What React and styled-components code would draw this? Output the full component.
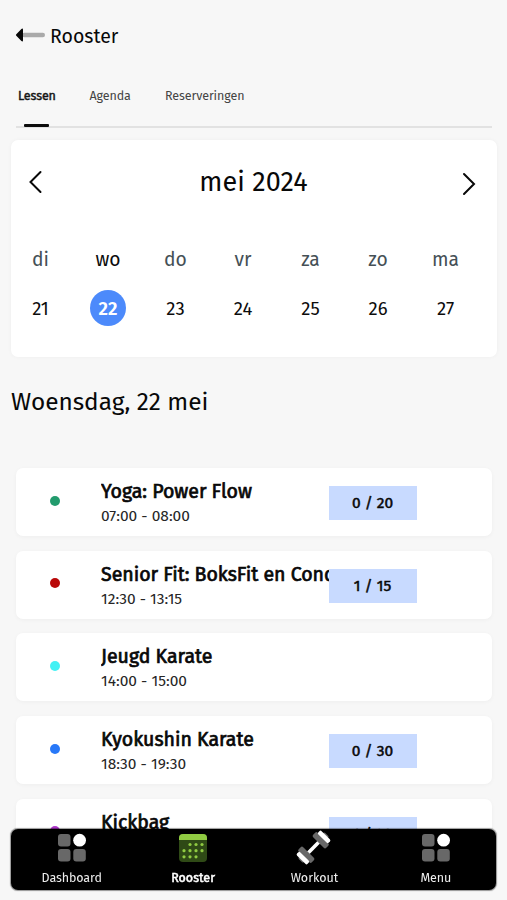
import React, { useState } from 'react'
import styled, { createGlobalStyle } from 'styled-components'

const GlobalStyle = createGlobalStyle`
  * {
    box-sizing: border-box;
  }

  body {
    margin: 0;
    background: #f7f7f7;
    color: #080808;
    font-family: 'Fira Sans', 'Noto Sans', sans-serif;
    overflow: hidden;
  }

  button {
    font: inherit;
    color: inherit;
    padding: 0;
    border: none;
    background: none;
  }
`

const Screen = styled.div`
  height: 900px;
  display: flex;
  flex-direction: column;
  overflow: hidden;
  background: #f7f7f7;
`

const Label = styled.span`
  letter-spacing: ${props => props.$spacing || 0}px;
  white-space: nowrap;
`

const Header = styled.header`
  display: flex;
  align-items: center;
  flex: none;
  height: 70px;
  padding-left: 15px;
  gap: 4px;
`

const Title = styled.h1`
  margin: 0;
  padding-top: 3px;
  font-size: 19.5px;
  line-height: 30px;
  font-weight: 400;
`

const Tabs = styled.nav`
  display: flex;
  flex: none;
  height: 58px;
  margin: 0 15px 0 16px;
  border-bottom: 2px solid #e2e2e2;
`

const Tab = styled.button`
  display: flex;
  flex-direction: column;
  justify-content: space-between;
  align-items: flex-start;
  width: ${props => props.$width}px;
  height: 57px;
  padding: 17px 0 0 2px;
  font-size: 12.5px;
  line-height: 18px;
  color: ${props => (props.$active ? '#151515' : '#444')};
  -webkit-text-stroke: ${props => (props.$active ? '0.45px #151515' : '0')};

  &::after {
    content: '';
    width: 25px;
    height: 3px;
    margin-left: 6px;
    border-radius: 1px;
    background: ${props => (props.$active ? '#0c0c0c' : 'transparent')};
  }
`

const Calendar = styled.section`
  flex: none;
  height: 217px;
  margin: 12px 10px 0 11px;
  border-radius: 7px;
  background: #fff;
  box-shadow: 0 0 4px rgba(0, 0, 0, 0.04);
`

const MonthBar = styled.div`
  display: flex;
  align-items: center;
  justify-content: space-between;
  height: 84px;
  padding: 0 21px 0 18px;
`

const Month = styled.h2`
  margin: 0;
  padding: 0 0 1px 2px;
  font-size: 27px;
  line-height: 36px;
  font-weight: 400;
`

const Arrow = styled.button`
  display: flex;
  padding-top: ${props => props.$drop || 0}px;
`

const Week = styled.div`
  display: flex;
  justify-content: space-between;
  padding: 21px 31px 0 9px;
`

const Day = styled.div`
  display: flex;
  flex-direction: column;
  align-items: center;
  width: 41px;
  font-size: 19.3px;
  line-height: 30px;
  color: ${props => (props.$active ? '#0c0c0c' : '#455056')};
`

const DayNumber = styled.div`
  width: 36px;
  height: 36px;
  margin-top: 15px;
  border-radius: 50%;
  text-align: center;
  font-size: 18.5px;
  line-height: 38px;
  font-weight: ${props => (props.$active ? 600 : 400)};
  color: ${props => (props.$active ? '#fff' : '#0c0c0c')};
  background: ${props => (props.$active ? '#4c8afb' : 'transparent')};
`

const DateHeading = styled.h2`
  flex: none;
  height: 111px;
  margin: 0 0 0 11px;
  padding-top: 28px;
  font-size: 24.4px;
  line-height: 34px;
  font-weight: 400;
`

const Lessons = styled.main`
  display: flex;
  flex: none;
  flex-direction: column;
  gap: 14.7px;
  height: 361px;
  padding: 0 15px 0 16px;
`

const Card = styled.article`
  display: grid;
  grid-template-columns: 85px 227.5px 88px;
  align-items: center;
  flex: none;
  height: 68px;
  border-radius: 7px;
  background: #fff;
  box-shadow: 0 1px 4px rgba(0, 0, 0, 0.04);
`

const Dot = styled.span`
  width: 10px;
  height: 10px;
  margin: 0 0 3px 34px;
  border-radius: 50%;
  background: ${props => props.$color};
`

const Info = styled.div`
  min-width: 0;
  padding-top: 2px;
  overflow: hidden;
`

const Name = styled.h3`
  margin: 0;
  font-size: 19.5px;
  line-height: 26px;
  font-weight: 400;
  -webkit-text-stroke: 0.7px #080808;
`

const Time = styled.div`
  font-size: 15.5px;
  line-height: 22px;
  color: #262626;
`

const Badge = styled.div`
  height: 34px;
  margin-top: 2px;
  background: #c8daff;
  text-align: center;
  font-size: 15.5px;
  line-height: 35px;
  -webkit-text-stroke: 0.5px #080808;
`

const BottomNav = styled.nav`
  position: fixed;
  left: 11px;
  top: 829px;
  width: 485px;
  height: 61px;
  display: grid;
  grid-template-columns: repeat(4, 121.4px);
  border-radius: 7px;
  background: #000;
  box-shadow: 0 0 1px 0.5px rgba(0, 0, 0, 0.4);
`

const NavItem = styled.button`
  display: flex;
  flex-direction: column;
  align-items: center;
  font-size: 12.5px;
  line-height: 18px;
  gap: 4px;
  color: ${props => (props.$active ? '#fff' : '#eee')};
  -webkit-text-stroke: ${props => (props.$active ? '0.5px #fff' : '0')};
`

const BackIcon = () => (
  <svg width="31" height="14" viewBox="0 0 31 14">
    <rect x="7" y="4.7" width="23" height="4.6" rx="2.2" fill="#aaa" />
    <path d="M1.3 6.2 6.4.9Q8 0 8 1.8v10.4q0 1.8-1.6.9L1.3 7.8Q.5 7 1.3 6.2Z" fill="#080808" />
  </svg>
)

const Chevron = ({ right }) => (
  <svg width="14" height="24" viewBox="0 0 14 24" fill="none" stroke="#080808" strokeWidth="2" strokeLinecap="round">
    <path d={right ? 'M2 2 12 12 2 22' : 'M11.5 2 1.5 12l10 10'} />
  </svg>
)

const TilesIcon = () => (
  <svg width="36" height="36" viewBox="0 0 36 36" fill="#686868">
    <rect x="4" y="5" width="12.5" height="12.5" rx="3" />
    <rect x="4" y="20" width="12.5" height="12.5" rx="3" />
    <rect x="19.3" y="20" width="12.5" height="12.5" rx="3" />
    <circle cx="25.6" cy="11.2" r="6.4" fill="#fff" />
  </svg>
)

const CalendarIcon = () => (
  <svg width="36" height="36" viewBox="0 0 36 36">
    <rect x="4" y="5" width="28" height="28" rx="4" fill="#2f4a16" />
    <path d="M4 11V9q0-4 4-4h20q4 0 4 4v2Z" fill="#90cb42" />
    <g fill="#90cb42">
      {[[15, 15.5], [21, 15.5], [27, 15.5], [9, 21.7], [15, 21.7], [21, 21.7], [27, 21.7], [9, 27.8], [15, 27.8], [21, 27.8]].map(([x, y]) => (
        <circle key={`${x}-${y}`} cx={x} cy={y} r="1.6" />
      ))}
    </g>
  </svg>
)

const DumbbellIcon = () => (
  <svg width="36" height="36" viewBox="0 0 36 36">
    <g transform="translate(17.5 18.5) rotate(-45)">
      <rect x="-18.6" y="-3.5" width="6" height="7" rx="1.5" fill="#686868" />
      <rect x="12.6" y="-3.5" width="6" height="7" rx="1.5" fill="#686868" />
      <rect x="-8" y="-1.8" width="16" height="3.6" fill="#fff" />
      <rect x="-13.4" y="-9.3" width="6.4" height="18.6" rx="1.8" fill="#686868" />
      <rect x="7" y="-9.3" width="6.4" height="18.6" rx="1.8" fill="#686868" />
      <rect x="-17.3" y="-7.4" width="4.6" height="14.8" rx="1.6" fill="#fff" />
      <rect x="12.7" y="-7.4" width="4.6" height="14.8" rx="1.6" fill="#fff" />
    </g>
  </svg>
)

const tabs = [
  { name: 'Lessen', width: 71.5, spacing: -0.1 },
  { name: 'Agenda', width: 75.5, spacing: -0.1 },
  { name: 'Reserveringen', width: 100, spacing: -0.1 }
]

const days = [
  ['di', 21], ['wo', 22], ['do', 23], ['vr', 24], ['za', 25], ['zo', 26], ['ma', 27]
]

const lessons = [
  { name: 'Yoga: Power Flow', time: '07:00 - 08:00', color: '#229b6d', places: '0 / 20' },
  { name: 'Senior Fit: BoksFit en Cond', time: '12:30 - 13:15', color: '#b90808', places: '1 / 15' },
  { name: 'Jeugd Karate', time: '14:00 - 15:00', color: '#42f1f4' },
  { name: 'Kyokushin Karate', time: '18:30 - 19:30', color: '#2878f8', places: '0 / 30' },
  { name: 'Kickbag', time: '19:30 - 20:30', color: '#b038cc', places: '1 / 20' }
]

const navItems = [
  { name: 'Dashboard', icon: TilesIcon, spacing: -0.1 },
  { name: 'Rooster', icon: CalendarIcon },
  { name: 'Workout', icon: DumbbellIcon },
  { name: 'Menu', icon: TilesIcon, spacing: -0.1 }
]

const App = () => {
  const [tab, setTab] = useState('Lessen')
  const [selected, setSelected] = useState(22)
  const [page, setPage] = useState('Rooster')

  return (
    <Screen>
      <GlobalStyle />
      <Header>
        <BackIcon />
        <Title><Label>Rooster</Label></Title>
      </Header>
      <Tabs>
        {tabs.map(({ name, width, spacing }) => (
          <Tab key={name} $width={width} $active={tab === name} onClick={() => setTab(name)}>
            <Label $spacing={spacing}>{name}</Label>
          </Tab>
        ))}
      </Tabs>
      <Calendar>
        <MonthBar>
          <Arrow><Chevron /></Arrow>
          <Month><Label $spacing={0.1}>mei 2024</Label></Month>
          <Arrow $drop={4}><Chevron right /></Arrow>
        </MonthBar>
        <Week>
          {days.map(([day, number]) => (
            <Day key={number} $active={selected === number} onClick={() => setSelected(number)}>
              <Label>{day}</Label>
              <DayNumber $active={selected === number}><Label>{number}</Label></DayNumber>
            </Day>
          ))}
        </Week>
      </Calendar>
      <DateHeading><Label>Woensdag, 22 mei</Label></DateHeading>
      <Lessons>
        {lessons.map(({ name, time, color, places }) => (
          <Card key={name}>
            <Dot $color={color} />
            <Info>
              <Name><Label>{name}</Label></Name>
              <Time><Label>{time}</Label></Time>
            </Info>
            {places && <Badge><Label>{places}</Label></Badge>}
          </Card>
        ))}
      </Lessons>
      <BottomNav>
        {navItems.map(({ name, icon: Icon, spacing }) => (
          <NavItem key={name} $active={page === name} onClick={() => setPage(name)}>
            <Icon />
            <Label $spacing={spacing}>{name}</Label>
          </NavItem>
        ))}
      </BottomNav>
    </Screen>
  )
}

export default App
